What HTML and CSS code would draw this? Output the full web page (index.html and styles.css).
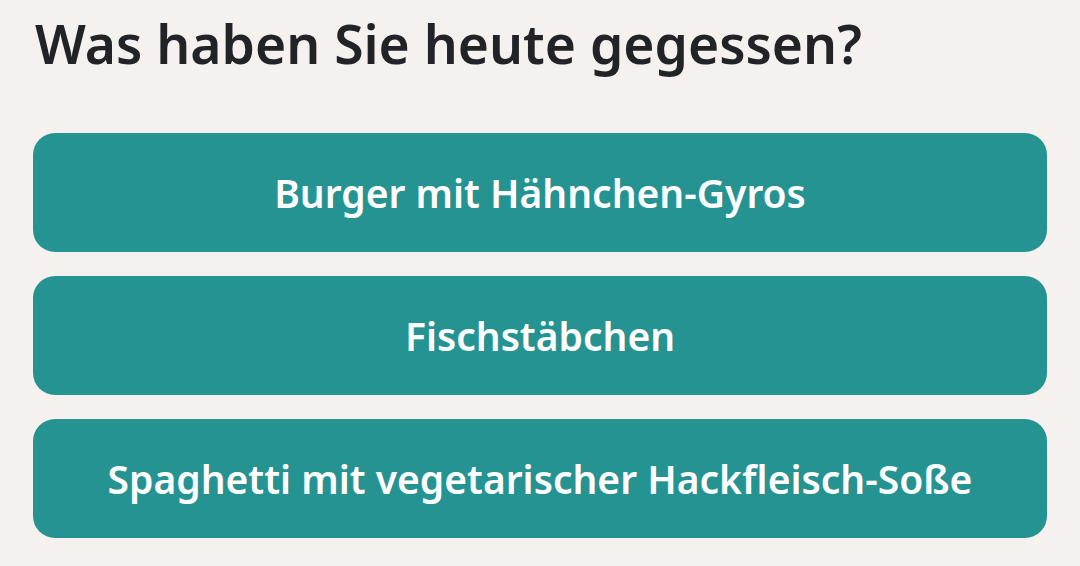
FILE: index.html
```html
<!DOCTYPE html>
<html lang="de">
<head>
    <meta charset="UTF-8">
    <meta name="viewport" content="width=device-width, initial-scale=1.0">
    <title>Umfrage</title>
    <link rel="stylesheet" href="styles.css">
</head>
<body>
    <div class="quiz">
        <!-- Frage -->
        <h1 class="question">Was haben Sie heute gegessen?</h1>

        <!-- Antworten -->
        <div class="answers">
            <button class="answer">Burger mit Hähnchen-Gyros</button>
            <button class="answer">Fischstäbchen</button>
            <button class="answer">Spaghetti mit vegetarischer Hackfleisch-Soße</button>
        </div>
    </div>
</body>
</html>
```

FILE: styles.css
```css
/* Global Styles */
body, html {
    margin: 0;
    padding: 0;
    font-family: 'Noto Sans', 'Open Sans', sans-serif;
    background: #f4f1ee;
    color: #222327;
}

.quiz {
    padding: 0 33px;
}

.question {
    margin: 0;
    padding: 10px 0 0 2px;
    height: 133px;
    box-sizing: border-box;
    font-size: 53.4px;
    font-weight: 600;
    line-height: 68px;
}

/* Answer buttons */
.answers {
    display: flex;
    flex-direction: column;
    gap: 24px;
}

.answer {
    height: 119px;
    padding-bottom: 2px;
    border: none;
    border-radius: 22px;
    background: #259392;
    color: #ffffff;
    font-family: inherit;
    font-size: 39px;
    font-weight: 600;
    cursor: pointer;
}
```
